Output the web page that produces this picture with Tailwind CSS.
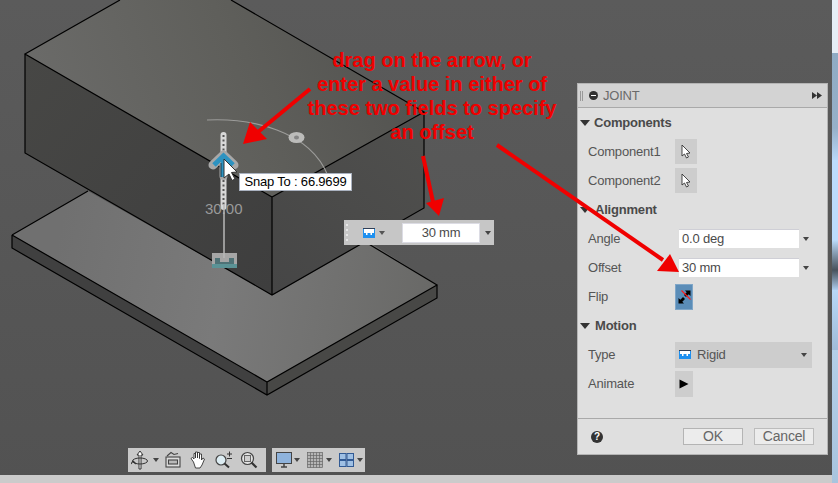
<!DOCTYPE html>
<html>
<head>
<meta charset="utf-8">
<script src="https://cdn.jsdelivr.net/npm/@tailwindcss/browser@4"></script>
</head>
<body class="m-0 overflow-hidden">
<div class="relative w-[838px] h-[483px] overflow-hidden bg-gradient-to-b from-[#5b5b5b] to-[#525252] font-['Liberation_Sans',Arial,sans-serif]">

  <!-- 3D model canvas -->
  <svg class="absolute left-0 top-0" width="838" height="483" viewBox="0 0 838 483" fill="none">
    <defs>
      <linearGradient id="topf" x1="60" y1="130" x2="380" y2="20" gradientUnits="userSpaceOnUse">
        <stop offset="0" stop-color="#6a6a68"/><stop offset="0.55" stop-color="#5f5f5b"/><stop offset="1" stop-color="#545451"/>
      </linearGradient>
      <linearGradient id="leftf" x1="25" y1="60" x2="270" y2="290" gradientUnits="userSpaceOnUse">
        <stop offset="0" stop-color="#474745"/><stop offset="1" stop-color="#3e3e3e"/>
      </linearGradient>
      <linearGradient id="rightf" x1="272" y1="290" x2="424" y2="120" gradientUnits="userSpaceOnUse">
        <stop offset="0" stop-color="#464646"/><stop offset="1" stop-color="#50504e"/>
      </linearGradient>
      <linearGradient id="plate" x1="60" y1="230" x2="430" y2="300" gradientUnits="userSpaceOnUse">
        <stop offset="0" stop-color="#707070"/><stop offset="0.45" stop-color="#7a7a7a"/><stop offset="1" stop-color="#696967"/>
      </linearGradient>
    </defs>
    <polygon points="12,235 88,191 273,295 367,241 437,285 267,382" fill="url(#plate)"/>
    <polygon points="12,235 267,382 267,395 12,248" fill="#404040"/>
    <polygon points="267,382 437,285 437,298 267,395" fill="#484846"/>
    <path d="M12 235 L88 191 M12 235 L267 382 L437 285 L367 243 M12 235 V248 L267 395 L437 298 V285 M267 382 V395" stroke="#000" stroke-width="1.2"/>
    <polygon points="120,0 231,0 424,112 272,197 25,54" fill="url(#topf)"/>
    <polygon points="25,54 272,197 272,295 25,153" fill="url(#leftf)"/>
    <polygon points="272,197 424,112 424,208 272,295" fill="url(#rightf)"/>
    <path d="M120 0 L25 54 L272 197 L424 112 L231 0 M25 54 V153 L272 295 L424 208 V112 M272 197 V295" stroke="#000" stroke-width="1.2"/>

    <!-- arc and handle -->
    <path d="M207 120 C250 118 310 130 328 176" stroke="#9c9c9a" stroke-width="1.2"/>
    <ellipse cx="296.500" cy="137.500" rx="8" ry="5.500" fill="#bcbcba"/>
    <ellipse cx="296.500" cy="137.500" rx="2.500" ry="2" fill="#858585"/>
    <!-- manipulator shaft -->
    <line x1="223.500" y1="135" x2="223.500" y2="207" stroke="#d8d8d8" stroke-width="6" stroke-linecap="round"/>
    <line x1="223.500" y1="135" x2="223.500" y2="207" stroke="#555" stroke-width="2" stroke-dasharray="2 2.500"/>
    <!-- rigid marker -->
    <rect x="212" y="253" width="25" height="15" fill="#a6a6a6"/>
    <path d="M215 264 V258 H220 V262 H229 V258 H234 V264 Z" fill="#4f7276"/>
    <rect x="212" y="264" width="25" height="4" fill="#5b9396"/>
    <!-- arrow handle -->
    <path d="M213 165 L223.500 155 L234 165" stroke="#a8a8a8" stroke-width="9" stroke-linejoin="round" stroke-linecap="round"/>
    <path d="M223.500 158 V176" stroke="#a8a8a8" stroke-width="8" stroke-linecap="round"/>
    <path d="M214 165 L223.500 156 L233 165" stroke="#2d93c1" stroke-width="5"/>
    <path d="M223.500 157 V177" stroke="#2d93c1" stroke-width="5"/>
    <path d="M221 163 V177" stroke="#123a4f" stroke-width="1"/>
  </svg>

  <!-- value label -->
  <span class="absolute left-[205px] top-[200px] text-[15px] leading-[18px] text-[#9a9a9a]">30.00</span>
  <!-- shaft running over the value label -->
  <svg class="absolute left-[220px] top-[204px]" width="8" height="54" viewBox="0 0 8 54" fill="none">
    <line x1="4" y1="0" x2="4" y2="54" stroke="#b8b8b8" stroke-width="1.500"/>
  </svg>

  <!-- cursor -->
  <svg class="absolute left-[222px] top-[158px]" width="18" height="24" viewBox="0 0 18 24">
    <path d="M2 1 L15 14 L9.500 14.500 L13 21 L10 22.500 L7 16 L2 20 Z" fill="#fff" stroke="#333" stroke-width="1"/>
  </svg>

  <!-- tooltip -->
  <div class="absolute left-[239px] top-[173px] w-[113px] h-[18px] bg-white border border-[#aab2c0] text-[13px] tracking-[-0.2px] leading-[16px] text-black flex items-center justify-center whitespace-nowrap">Snap To : 66.9699</div>

  <!-- floating value bar -->
  <div class="absolute left-[344px] top-[220px] w-[150px] h-[25px] bg-[#c6c6c6] flex items-center">
    <div class="w-[6px] h-full ml-[1px] flex flex-col justify-center gap-[3px] pl-[1px]">
      <span class="w-[2px] h-[2px] bg-[#e6e6e6]"></span><span class="w-[2px] h-[2px] bg-[#e6e6e6]"></span><span class="w-[2px] h-[2px] bg-[#e6e6e6]"></span><span class="w-[2px] h-[2px] bg-[#e6e6e6]"></span>
    </div>
    <svg class="ml-[12px]" width="12" height="10" viewBox="0 0 12 10">
      <rect width="12" height="10" fill="#1e90f0"/><path d="M1 1 H11 V5 H9 V7 H7.500 V5 H4.500 V7 H3 V5 H1 Z" fill="#fff"/><rect y="0" width="12" height="1" fill="#2f3f57"/>
    </svg>
    <span class="ml-[4px] w-0 h-0 border-x-[3.500px] border-x-transparent border-t-[4px] border-t-[#555]"></span>
    <div class="ml-[17px] w-[78px] h-[20px] bg-white border border-[#dcdce4] flex items-center justify-center text-[13px] tracking-[-0.2px] text-[#4a4a4a]">30 mm</div>
    <span class="ml-[5px] w-0 h-0 border-x-[3.500px] border-x-transparent border-t-[4px] border-t-[#444]"></span>
  </div>

  <!-- JOINT panel -->
  <div class="absolute left-[577px] top-[83px] w-[251px] h-[372px] bg-[#dfdfdf] border border-[#b4b4b4] flex flex-col text-[13px] tracking-[-0.2px] text-[#555]">
    <div class="h-[24px] shrink-0 bg-[#d3d3d3] border-b border-[#a9a9a9] flex items-center">
      <span class="ml-[2px] w-[3px] h-[10px] border-x border-[#999]"></span>
      <span class="ml-[6px] w-[9px] h-[9px] rounded-full bg-[#333] flex items-center justify-center"><span class="w-[5px] h-[1.500px] bg-white"></span></span>
      <span class="ml-[5px] text-[13px] text-[#6a6a6a]">JOINT</span>
      <svg class="ml-auto mr-[5px]" width="10" height="7" viewBox="0 0 10 7"><path d="M0 0 L5 3.500 L0 7Z M5 0 L10 3.500 L5 7Z" fill="#333"/></svg>
    </div>
    <div class="flex-1 flex flex-col pl-[10px] pr-[14px]">
      <div class="h-[29px] flex items-center shrink-0 relative left-[-8px]">
        <span class="w-0 h-0 border-x-[5px] border-x-transparent border-t-[6px] border-t-[#333]"></span>
        <span class="ml-[4px] font-bold text-[#4a4a4a]">Components</span>
      </div>
      <div class="h-[29px] flex items-center shrink-0">
        <span class="w-[87px]">Component1</span>
        <span class="w-[22px] h-[25px] bg-[#cdcdcd] flex items-center justify-center">
          <svg width="10" height="15" viewBox="0 0 10 15"><path d="M1 1 V12 L3.500 10 L5.500 14 L7.500 13 L5.500 9.500 L9 9 Z" fill="#fff" stroke="#333" stroke-width="0.900"/></svg>
        </span>
      </div>
      <div class="h-[29px] flex items-center shrink-0">
        <span class="w-[87px]">Component2</span>
        <span class="w-[22px] h-[25px] bg-[#cdcdcd] flex items-center justify-center">
          <svg width="10" height="15" viewBox="0 0 10 15"><path d="M1 1 V12 L3.500 10 L5.500 14 L7.500 13 L5.500 9.500 L9 9 Z" fill="#fff" stroke="#333" stroke-width="0.900"/></svg>
        </span>
      </div>
      <div class="h-[29px] flex items-center shrink-0 relative left-[-8px]">
        <span class="w-0 h-0 border-x-[5px] border-x-transparent border-t-[6px] border-t-[#333]"></span>
        <span class="ml-[5px] font-bold text-[#4a4a4a]">Alignment</span>
      </div>
      <div class="h-[29px] flex items-center shrink-0">
        <span class="w-[91px]">Angle</span>
        <span class="w-[120px] h-[19px] bg-white border-t border-[#cfcfd6] pl-[3px] flex items-center text-[#4a4a4a]">0.0 deg</span>
        <span class="ml-[4px] w-0 h-0 border-x-[3.500px] border-x-transparent border-t-[4px] border-t-[#444]"></span>
      </div>
      <div class="h-[29px] flex items-center shrink-0">
        <span class="w-[91px]">Offset</span>
        <span class="w-[120px] h-[19px] bg-white border-t border-[#cfcfd6] pl-[3px] flex items-center text-[#4a4a4a]">30 mm</span>
        <span class="ml-[4px] w-0 h-0 border-x-[3.500px] border-x-transparent border-t-[4px] border-t-[#444]"></span>
      </div>
      <div class="h-[29px] flex items-center shrink-0">
        <span class="w-[87px]">Flip</span>
        <span class="w-[18px] h-[26px] bg-[#5b8db8] border border-[#7fa6c8] flex items-center justify-center">
          <svg width="13" height="14" viewBox="0 0 13 14"><path d="M0.500 13.500 V8 L2.300 9.800 L5 7 L7 9 L4.300 11.700 L6 13.500 Z M12.500 0.500 V6 L10.700 4.200 L8 7 L6 5 L8.700 2.300 L7 0.500 Z" fill="#000"/><path d="M3.500 0.500 L12.500 9.500" stroke="#ff1a1a" stroke-width="1.100"/></svg>
        </span>
      </div>
      <div class="h-[29px] flex items-center shrink-0 relative left-[-8px]">
        <span class="w-0 h-0 border-x-[5px] border-x-transparent border-t-[6px] border-t-[#333]"></span>
        <span class="ml-[5px] font-bold text-[#4a4a4a]">Motion</span>
      </div>
      <div class="h-[29px] flex items-center shrink-0">
        <span class="w-[87px]">Type</span>
        <span class="w-[137px] h-[26px] bg-[#cdcdcd] flex items-center pl-[4px] pr-[5px]">
          <svg width="12" height="9" viewBox="0 0 12 9"><rect width="12" height="9" fill="#1e90f0"/><path d="M1 1 H11 V4 H9 V6 H7.500 V4 H4.500 V6 H3 V4 H1 Z" fill="#fff"/><rect width="12" height="1" fill="#2f3f57"/></svg>
          <span class="ml-[6px]">Rigid</span>
          <span class="ml-auto w-0 h-0 border-x-[3.500px] border-x-transparent border-t-[4px] border-t-[#444]"></span>
        </span>
      </div>
      <div class="h-[29px] flex items-center shrink-0">
        <span class="w-[87px]">Animate</span>
        <span class="w-[18px] h-[26px] bg-[#cdcdcd] flex items-center justify-center">
          <svg width="10" height="10" viewBox="0 0 10 10"><path d="M0.500 0.500 L9.500 5 L0.500 9.500 Z" fill="#000"/></svg>
        </span>
      </div>
    </div>
    <div class="h-[36px] shrink-0 border-t border-[#a9a9a9] flex items-center pl-[13px]">
      <span class="w-[12px] h-[12px] rounded-full bg-[#333] text-white text-[10px] font-bold leading-none flex items-center justify-center">?</span>
      <span class="ml-[80px] w-[60px] h-[17px] bg-[#ececec] border border-[#b4b4b4] flex items-center justify-center text-[14px] text-[#666]">OK</span>
      <span class="ml-[11px] w-[60px] h-[17px] bg-[#ececec] border border-[#bcbcbc] flex items-center justify-center text-[14px] text-[#666]">Cancel</span>
    </div>
  </div>

  <!-- right edge strip: neighbouring window showing at the screen edge -->
  <div class="absolute right-0 top-0 w-[6px] h-[483px] flex flex-col">
    <div class="h-[53px] bg-[#e6eef6]"></div>
    <div class="h-[75px] bg-gradient-to-b from-[#8fabc4] to-[#96b0c8]"></div>
    <div class="h-[32px] bg-gradient-to-b from-[#96b0c8] to-[#b8d8f8]"></div>
    <div class="h-[80px] bg-[#bcdcfc]"></div>
    <div class="h-[30px] bg-gradient-to-b from-[#bcdcfc] to-[#48525c]"></div>
    <div class="h-[20px] bg-gradient-to-b from-[#48525c] to-[#b0cff0]"></div>
    <div class="h-[60px] bg-gradient-to-b from-[#b8d8f8] to-[#a0bcd8]"></div>
    <div class="h-[133px] bg-gradient-to-b from-[#b4cfe8] to-[#a8c4de]"></div>
  </div>

  <!-- bottom status strip -->
  <div class="absolute left-0 bottom-0 w-[832px] h-[8px] bg-[#cbcbcb]"></div>

  <!-- nav toolbars -->
  <div class="absolute left-[128px] top-[448px] flex gap-[6px]">
    <div class="w-[138px] h-[24px] bg-[#c9c9c9] flex items-center pl-[3px]">
      <svg width="18" height="20" viewBox="0 0 18 20" fill="none" stroke="#333" stroke-width="1"><path d="M9 1 L6 5 H8 V19 H10 V5 H12 Z" fill="#fff"/><ellipse cx="9" cy="11" rx="7.500" ry="3"/><path d="M2 11 L5 14 M2 11 L0 14" stroke-width="1.200"/></svg>
      <span class="ml-[4px] w-0 h-0 border-x-[3.500px] border-x-transparent border-t-[4px] border-t-[#444]"></span>
      <svg class="ml-[5px]" width="18" height="18" viewBox="0 0 18 18" fill="none" stroke="#444" stroke-width="1.100"><rect x="2" y="6" width="14" height="10" fill="#dcdcdc"/><rect x="4.500" y="9" width="9" height="4" fill="#b9b9b9"/><path d="M3 5 L7 1.500 L10 3.500 L14 2.500"/></svg>
      <svg class="ml-[7px]" width="18" height="20" viewBox="0 0 18 20" fill="#fff" stroke="#333" stroke-width="0.900"><path d="M4.500 12 L2 8.500 L3.500 7.500 L5 9 V3.500 H6.500 V8 V2 H8.500 V8 V2.500 H10.500 V8.500 V4 H12.500 V10 L14 8 L15.500 9 L13 15 L11 18 H6.500 Z"/></svg>
      <svg class="ml-[7px]" width="19" height="18" viewBox="0 0 19 18" fill="none"><circle cx="7" cy="9" r="5" fill="#dcecf2" stroke="#444" stroke-width="1.200"/><path d="M10.500 12.500 L15 16.500" stroke="#333" stroke-width="2"/><path d="M13 3 H18 M15.500 0.500 V5.500 M13 7.500 H18" stroke="#333" stroke-width="1"/></svg>
      <svg class="ml-[7px]" width="18" height="18" viewBox="0 0 18 18" fill="none"><circle cx="7.500" cy="7.500" r="6" fill="#e4e4e4" stroke="#444" stroke-width="1.200"/><rect x="4.500" y="4.500" width="6" height="6" fill="#cfcfcf" stroke="#666" stroke-width="1"/><path d="M11.500 11.500 L16.500 16.500" stroke="#333" stroke-width="2.200"/></svg>
    </div>
    <div class="w-[93px] h-[24px] bg-[#c9c9c9] flex items-center pl-[4px]">
      <svg width="16" height="16" viewBox="0 0 16 16" fill="none"><rect x="0.500" y="0.500" width="15" height="11" fill="#8fb3dc" stroke="#444"/><path d="M5 15 H11 M8 12 V15" stroke="#444" stroke-width="1.500"/></svg>
      <span class="ml-[2px] w-0 h-0 border-x-[3.500px] border-x-transparent border-t-[4px] border-t-[#444]"></span>
      <svg class="ml-[7px]" width="16" height="16" viewBox="0 0 16 16" fill="#b5b5b5" stroke="#666" stroke-width="0.700"><rect x="0.500" y="0.500" width="15" height="15"/><path d="M3.500 0.500 V15.500 M6.500 0.500 V15.500 M9.500 0.500 V15.500 M12.500 0.500 V15.500 M0.500 3.500 H15.500 M0.500 6.500 H15.500 M0.500 9.500 H15.500 M0.500 12.500 H15.500"/></svg>
      <span class="ml-[3px] w-0 h-0 border-x-[3.500px] border-x-transparent border-t-[4px] border-t-[#444]"></span>
      <svg class="ml-[7px]" width="15" height="14" viewBox="0 0 15 14" fill="#9fc0e4" stroke="#315a94" stroke-width="1"><rect x="0.500" y="0.500" width="6.500" height="6"/><rect x="8" y="0.500" width="6.500" height="6"/><rect x="0.500" y="7.500" width="6.500" height="6"/><rect x="8" y="7.500" width="6.500" height="6"/></svg>
      <span class="ml-[3px] w-0 h-0 border-x-[3.500px] border-x-transparent border-t-[4px] border-t-[#444]"></span>
    </div>
  </div>

  <!-- red annotation text -->
  <div class="absolute left-[279px] top-[48px] w-[306px] text-center text-[20px] leading-[24px] font-bold text-[#f00000] whitespace-nowrap">
    drag on the arrow, or<br>enter a value in either of<br>these two fields to specify<br>an offset
  </div>

  <!-- red arrows -->
  <svg class="absolute left-0 top-0" width="838" height="483" viewBox="0 0 838 483" fill="none">
    <path d="M310 89 L258 132" stroke="#f00000" stroke-width="4"/>
    <path d="M243 144 L250 122 L267 139 Z" fill="#f00000"/>
    <path d="M423 156 L433 202" stroke="#f00000" stroke-width="4"/>
    <path d="M439 216 L426 203 L444 198 Z" fill="#f00000"/>
    <path d="M497 145 L663 260" stroke="#f00000" stroke-width="4"/>
    <path d="M679 272 L657 271 L670 254 Z" fill="#f00000"/>
  </svg>
</div>
</body>
</html>
